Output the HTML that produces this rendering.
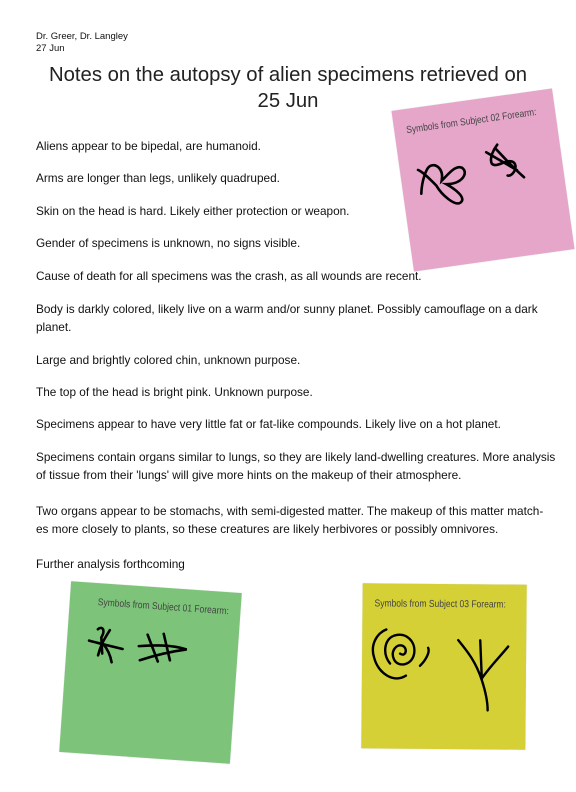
<!DOCTYPE html>
<html><head><meta charset="utf-8"><style>
body{margin:0;width:576px;height:792px;background:#fff;position:relative;overflow:hidden;font-family:"Liberation Sans",sans-serif;color:#111}
.p{position:absolute;left:36px;font-size:11.8px;line-height:18px;width:520px;white-space:nowrap}
.h{position:absolute;left:36px;font-size:9.5px;line-height:12px}
.t{position:absolute;left:0;width:576px;text-align:center;font-size:20.3px;line-height:26px;top:62px;color:#222}
.note{position:absolute;box-shadow:0 0 1px rgba(0,0,0,.2)}
.lab{position:absolute;font-family:"Liberation Sans Narrow","Liberation Sans",sans-serif;font-size:10px;color:#444;white-space:nowrap;transform:scaleX(.85);transform-origin:left}
svg{position:absolute;left:0;top:0}
</style></head><body>
<div class="h" style="top:31px">Dr. Greer, Dr. Langley<br>27 Jun</div>
<div class="t">Notes on the autopsy of alien specimens retrieved on<br>25 Jun</div>
<div class="p" style="top:137px">Aliens appear to be bipedal, are humanoid.</div>
<div class="p" style="top:169px">Arms are longer than legs, unlikely quadruped.</div>
<div class="p" style="top:202px">Skin on the head is hard. Likely either protection or weapon.</div>
<div class="p" style="top:234px">Gender of specimens is unknown, no signs visible.</div>
<div class="p" style="top:267px">Cause of death for all specimens was the crash, as all wounds are recent.</div>
<div class="p" style="top:300px">Body is darkly colored, likely live on a warm and/or sunny planet. Possibly camouflage on a dark<br>planet.</div>
<div class="p" style="top:351px">Large and brightly colored chin, unknown purpose.</div>
<div class="p" style="top:383px">The top of the head is bright pink. Unknown purpose.</div>
<div class="p" style="top:415px">Specimens appear to have very little fat or fat-like compounds. Likely live on a hot planet.</div>
<div class="p" style="top:448px">Specimens contain organs similar to lungs, so they are likely land-dwelling creatures. More analysis<br>of tissue from their 'lungs' will give more hints on the makeup of their atmosphere.</div>
<div class="p" style="top:502px">Two organs appear to be stomachs, with semi-digested matter. The makeup of this matter match-<br>es more closely to plants, so these creatures are likely herbivores or possibly omnivores.</div>
<div class="p" style="top:555px">Further analysis forthcoming</div>

<div class="note" style="left:402px;top:99px;width:162px;height:162px;background:#e6a6ca;transform:rotate(-8deg)">
<div class="lab" style="left:12px;top:16px">Symbols from Subject 02 Forearm:</div>
<svg width="162" height="162" viewBox="0 0 162 162" fill="none" stroke="#000" stroke-width="2.6" stroke-linecap="round">
<path d="M18 86 C20 74 26 62 30 60 C36 57 44 64 40 76 C48 70 56 62 62 66 C68 72 60 82 44 80 C52 86 62 96 56 100 C50 104 38 90 34 80 C28 72 22 64 18 62"/>
<path d="M88 54 L116 76 M100 48 C96 52 90 60 92 66 C96 72 108 62 114 68 C118 74 110 82 106 80 M98 52 C104 60 110 70 122 84"/>
</svg></div>

<div class="note" style="left:65px;top:587px;width:171px;height:171px;background:#7dc47a;transform:rotate(4deg)">
<div class="lab" style="left:28px;top:14px">Symbols from Subject 01 Forearm:</div>
<svg width="171" height="171" viewBox="0 0 171 171" fill="none" stroke="#000" stroke-width="2.6" stroke-linecap="round">
<path d="M30 46 C34 42 38 46 34 54 L36 70 M42 46 C38 54 34 60 32 72 M22 58 C32 60 44 62 56 64 M36 60 C40 64 44 70 46 78"/>
<path d="M80 48 L92 74 M96 46 L104 72 M72 60 C88 58 104 56 120 60 C110 62 94 66 74 74"/>
</svg></div>

<div class="note" style="left:362px;top:584px;width:164px;height:165px;background:#d4d036;transform:rotate(0.5deg)">
<div class="lab" style="left:12px;top:15px">Symbols from Subject 03 Forearm:</div>
<svg width="164" height="165" viewBox="0 0 164 165" fill="none" stroke="#000" stroke-width="2.4" stroke-linecap="round">
<path d="M24 46 C14 50 8 62 12 74 C16 90 32 100 44 92"/>
<path d="M58 82 C64 76 68 68 66 64"/>
<path d="M28 80 C20 70 22 56 32 52 C44 48 54 58 52 70 C50 82 36 84 32 76 C28 68 34 60 40 62 C46 64 44 74 38 70"/>
<path d="M96 56 C106 68 114 78 120 96 C124 108 126 118 126 126 M120 96 L118 56 M120 94 C128 82 138 72 146 62"/>
</svg></div>
</body></html>
